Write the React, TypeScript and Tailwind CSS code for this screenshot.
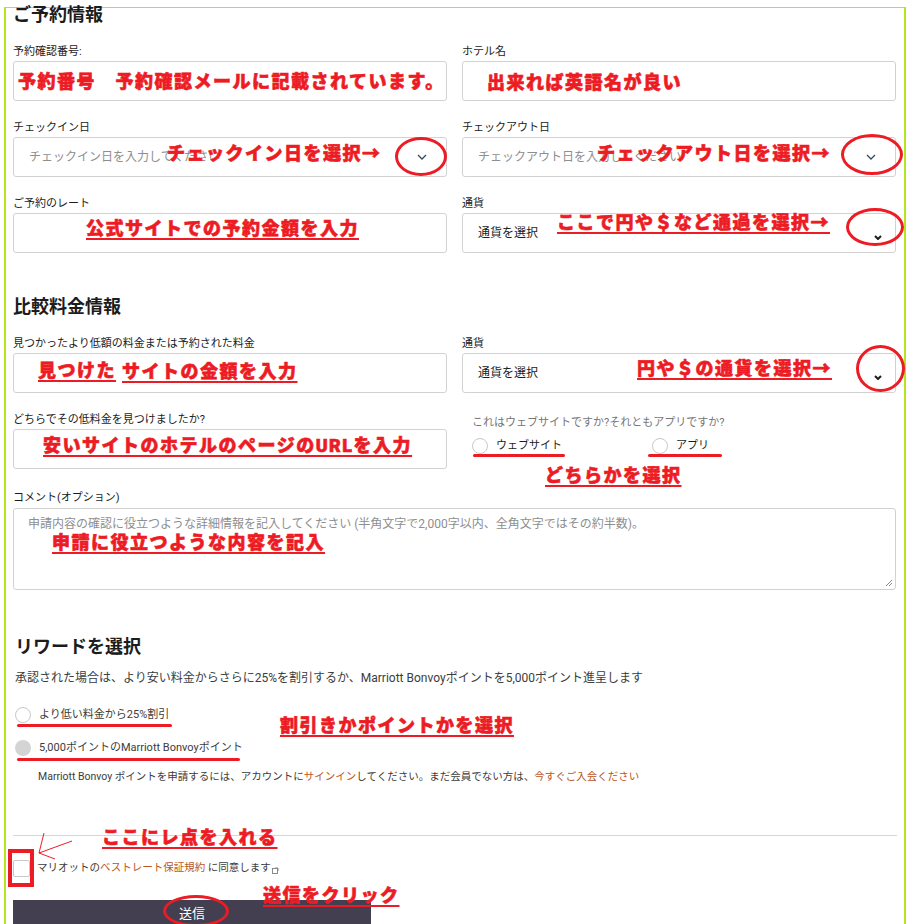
import React from "react"

function Label({ children, className = "" }: { children: React.ReactNode; className?: string }) {
  return <div className={"text-[11px] leading-4 text-[#1c1c1c] " + className}>{children}</div>
}

function Box({ children, className = "" }: { children?: React.ReactNode; className?: string }) {
  return (
    <div className={"mt-[1px] flex h-[40px] items-center justify-between rounded-[3px] border border-[#d2d2d2] bg-white " + className}>
      {children}
    </div>
  )
}

function ThinChevron() {
  return (
    <svg width="10" height="6" viewBox="0 0 10 6" className="mr-[19px]">
      <path d="M1 1 L5 5 L9 1" fill="none" stroke="#34495e" strokeWidth="1.3" />
    </svg>
  )
}

function BoldChevron() {
  return (
    <svg width="8" height="5" viewBox="0 0 8 5" className="mr-[13px] mt-[8px]">
      <path d="M1 1 L4 4 L7 1" fill="none" stroke="#1c1c1c" strokeWidth="2" />
    </svg>
  )
}

function Radio({ filled = false }: { filled?: boolean }) {
  return filled ? (
    <span className="block h-[16px] w-[16px] shrink-0 rounded-full bg-[#d4d4d4]" />
  ) : (
    <span className="block h-[16px] w-[16px] shrink-0 rounded-full border border-[#c8c8c8] bg-white" />
  )
}

// red paint-style note laid over the form
const note =
  "absolute whitespace-nowrap text-[18px] font-black leading-[18px] tracking-[1.5px] text-[#ED1C24] [-webkit-text-stroke:0.6px_#ED1C24]"
const noteU = note + " underline decoration-2 underline-offset-[3px]"

export default function App() {
  return (
    <div className="relative h-[924px] w-[912px] overflow-hidden bg-white font-['Roboto','Noto_Sans_CJK_JP',sans-serif] text-[#1c1c1c]">
      {/* lime frame */}
      <div className="absolute left-[4px] top-[7px] h-[940px] w-[902px] border-l-2 border-r-2 border-t border-[#B5E61D]" />

      <div className="relative w-[897px] pl-[13px]">
        <h2 className="pt-[3px] text-[18px] font-bold leading-6">ご予約情報</h2>

        <div className="mt-[17px] grid grid-cols-[434px_434px] gap-x-[15px] gap-y-[19px]">
          <div>
            <Label>予約確認番号:</Label>
            <Box />
          </div>
          <div>
            <Label>ホテル名</Label>
            <Box />
          </div>
          <div>
            <Label>チェックイン日</Label>
            <Box>
              <span className="pl-[15px] text-[12px] text-[#8e8e8e]">チェックイン日を入力してください</span>
              <ThinChevron />
            </Box>
          </div>
          <div>
            <Label>チェックアウト日</Label>
            <Box>
              <span className="pl-[15px] text-[12px] text-[#8e8e8e]">チェックアウト日を入力してください</span>
              <ThinChevron />
            </Box>
          </div>
          <div>
            <Label>ご予約のレート</Label>
            <Box />
          </div>
          <div>
            <Label>通貨</Label>
            <Box>
              <span className="pl-[15px] text-[12px] text-[#1c1c1c]">通貨を選択</span>
              <BoldChevron />
            </Box>
          </div>
        </div>

        <h2 className="mt-[42px] text-[18px] font-bold leading-6">比較料金情報</h2>

        <div className="mt-[17px] grid grid-cols-[434px_434px] gap-x-[15px] gap-y-[19px]">
          <div>
            <Label>見つかったより低額の料金または予約された料金</Label>
            <Box />
          </div>
          <div>
            <Label>通貨</Label>
            <Box>
              <span className="pl-[15px] text-[12px] text-[#1c1c1c]">通貨を選択</span>
              <BoldChevron />
            </Box>
          </div>
          <div>
            <Label>どちらでその低料金を見つけましたか?</Label>
            <Box />
          </div>
          <div className="pl-[10px] pt-[3px]">
            <Label className="text-[#767676]">これはウェブサイトですか?それともアプリですか?</Label>
            <div className="mt-[7px] flex items-center">
              <label className="flex w-[180px] items-center gap-[8px] text-[11px] leading-4">
                <Radio />
                ウェブサイト
              </label>
              <label className="flex items-center gap-[8px] text-[11px] leading-4">
                <Radio />
                アプリ
              </label>
            </div>
          </div>
        </div>

        <Label className="mt-[21px]">コメント(オプション)</Label>
        <div className="relative mt-[2px] h-[82px] w-[883px] rounded-[3px] border border-[#d2d2d2] px-[14px] pt-[2px]">
          <span className="text-[12px] leading-5 text-[#8e8e8e]">
            申請内容の確認に役立つような詳細情報を記入してください (半角文字で2,000字以内、全角文字ではその約半数)。
          </span>
          <svg width="8" height="8" viewBox="0 0 8 8" className="absolute bottom-[2px] right-[2px]">
            <path d="M7 1 L1 7 M7 4 L4 7" stroke="#8a8a8a" strokeWidth="1" />
          </svg>
        </div>

        <h2 className="mt-[45px] pl-[2px] text-[18px] font-bold leading-6">リワードを選択</h2>
        <p className="mt-[10px] pl-[2px] text-[12px] leading-[18px] text-[#3c3c3c]">
          承認された場合は、より安い料金からさらに25%を割引するか、Marriott Bonvoyポイントを5,000ポイント進呈します
        </p>

        <label className="mt-[19px] flex items-center gap-[8px] pl-[2px] text-[11px] leading-[18px] text-[#3c3c3c]">
          <Radio />
          より低い料金から25%割引
        </label>
        <label className="mt-[15px] flex items-center gap-[8px] pl-[2px] text-[11px] leading-[18px] text-[#3c3c3c]">
          <Radio filled />
          5,000ポイントのMarriott Bonvoyポイント
        </label>
        <p className="mt-[11px] pl-[25px] text-[10.5px] leading-[18px] text-[#3c3c3c]">
          Marriott Bonvoy ポイントを申請するには、アカウントに<span className="text-[#b9561d]">サインイン</span>してください。まだ会員でない方は、<span className="text-[#b9561d]">今すぐご入会ください</span>
        </p>

        <div className="mt-[49px] h-px w-[884px] bg-[#d6d6d6]" />

        <label className="mt-[23px] flex items-center gap-[7px] text-[10.5px] leading-[18px] text-[#3c3c3c]">
          <span className="block h-[17px] w-[17px] shrink-0 rounded-[2px] border border-[#c8c8c8] bg-white" />
          <span>
            マリオットの<span className="text-[#b9561d]">ベストレート保証規約</span> に同意します
          </span>
          <svg width="7" height="7" viewBox="0 0 7 7" className="-ml-[6px] mt-[4px]">
            <rect x="0.5" y="1.5" width="5" height="5" fill="none" stroke="#8a8a8a" strokeWidth="1" />
            <path d="M3 1 H6 V4" fill="none" stroke="#8a8a8a" strokeWidth="1" />
          </svg>
        </label>

        <button className="mt-[23px] flex h-[40px] w-[358px] items-start justify-center bg-[#433f50] pt-[4px] text-[13px] leading-5 text-white">
          送信
        </button>
      </div>

      {/* red annotations */}
      <span className={note + " left-[18px] top-[73px]"}>予約番号　予約確認メールに記載されています。</span>
      <span className={note + " left-[487px] top-[74px]"}>出来れば英語名が良い</span>
      <span className={note + " left-[167px] top-[145px]"}>チェックイン日を選択→</span>
      <span className={note + " left-[597px] top-[145px]"}>チェックアウト日を選択→</span>
      <span className={noteU + " left-[86px] top-[220px]"}>公式サイトでの予約金額を入力</span>
      <span className={noteU + " left-[557px] top-[214px]"}>ここで円や＄など通過を選択→</span>
      <span className={noteU + " left-[38px] top-[362px]"}>見つけた</span>
      <span className={noteU + " left-[122px] top-[363px]"}>サイトの金額を入力</span>
      <span className={noteU + " left-[637px] top-[360px]"}>円や＄の通貨を選択→</span>
      <span className={noteU + " left-[43px] top-[437px]"}>安いサイトのホテルのページのURLを入力</span>
      <span className={noteU + " left-[545px] top-[467px]"}>どちらかを選択</span>
      <span className={noteU + " left-[52px] top-[534px]"}>申請に役立つような内容を記入</span>
      <span className={noteU + " left-[280px] top-[717px]"}>割引きかポイントかを選択</span>
      <span className={noteU + " left-[102px] top-[829px]"}>ここにレ点を入れる</span>
      <span className={noteU + " left-[263px] top-[887px]"}>送信をクリック</span>

      {/* red circles */}
      <div className="absolute left-[395px] top-[137px] h-[39px] w-[52px] rounded-[50%] border-[3px] border-[#ED1C24]" />
      <div className="absolute left-[841px] top-[134px] h-[41px] w-[62px] rounded-[50%] border-[3px] border-[#ED1C24]" />
      <div className="absolute left-[846px] top-[208px] h-[38px] w-[58px] rounded-[50%] border-[3px] border-[#ED1C24]" />
      <div className="absolute left-[856px] top-[345px] h-[47px] w-[49px] rounded-[50%] border-[3px] border-[#ED1C24]" />
      <div className="absolute left-[163px] top-[895px] h-[32px] w-[66px] rounded-[50%] border-[3px] border-[#ED1C24]" />
      <div className="absolute left-[8px] top-[849px] h-[38px] w-[26px] border-[4px] border-[#ED1C24]" />

      {/* red underline bars */}
      <div className="absolute left-[473px] top-[454px] h-[3px] w-[92px] rounded-full bg-[#ED1C24]" />
      <div className="absolute left-[648px] top-[454px] h-[3px] w-[74px] rounded-full bg-[#ED1C24]" />
      <div className="absolute left-[17px] top-[724px] h-[3px] w-[155px] rounded-full bg-[#ED1C24]" />
      <div className="absolute left-[17px] top-[758px] h-[3px] w-[223px] rounded-full bg-[#ED1C24]" />

      <svg className="absolute left-0 top-[828px]" width="80" height="36" viewBox="0 0 80 36">
        <path d="M44 5 L39 25 M72 13 L39 25 L55 31" fill="none" stroke="#ED1C24" strokeWidth="1" />
      </svg>
    </div>
  )
}
